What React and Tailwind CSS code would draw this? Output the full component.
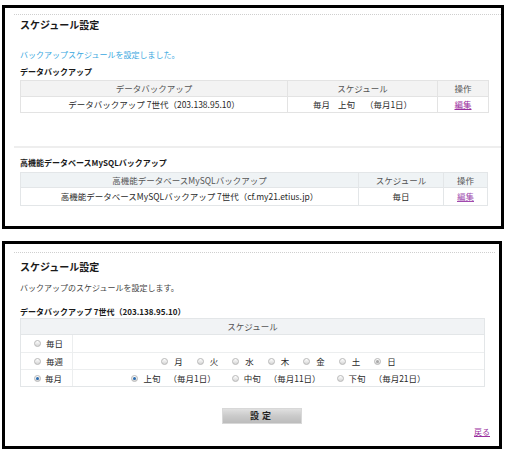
import React from "react";

function Radio({ checked = false, disabled = false }) {
  return (
    <span className="inline-flex w-[7px] h-[7px] shrink-0 items-center justify-center rounded-full border border-[#b8b8b8] bg-linear-to-b from-white to-[#d6d6d6]">
      {checked && !disabled && <span className="w-[3px] h-[3px] rounded-full bg-[#2b6cb0]" />}
      {checked && disabled && <span className="w-[3px] h-[3px] rounded-full bg-[#a8a8a8]" />}
    </span>
  );
}

function Day({ label, checked, disabled }) {
  return (
    <span className="flex items-center gap-[6px]">
      <Radio checked={checked} disabled={disabled} />
      <span>{label}</span>
    </span>
  );
}

export default function App() {
  return (
    <div className="w-[506px] h-[455px] bg-white overflow-hidden pt-[5px] pl-[2px] font-['Noto_Sans_CJK_JP','Noto_Sans',sans-serif] text-[#2a2a2a]">
      {/* Box 1 */}
      <div className="w-[502px] h-[224px] border-[3px] border-black pl-[9px]">
        <div className="mt-[6px] border-t border-dotted border-[#cfcfcf] pl-[6px] pr-[12px]">
          <div className="mt-[3px] h-[14px] leading-[14px] text-[10px] font-bold text-[#1a1a1a]">スケジュール設定</div>
          <div className="mt-[17px] h-[12px] leading-[12px] text-[8px] text-[#3aa8e0]">バックアップスケジュールを設定しました。</div>
          <div className="mt-[5px] h-[12px] leading-[12px] text-[8px] font-bold text-[#1a1a1a]">データバックアップ</div>
          <div className="mt-[2px] border border-[#e3e3e3] text-[8.5px]">
            <div className="flex h-[16px] bg-[#f3f3f3] text-[#555] border-b border-[#e3e3e3]">
              <div className="w-[267px] flex items-center justify-center border-r border-[#e3e3e3]">データバックアップ</div>
              <div className="w-[150px] flex items-center justify-center border-r border-[#e3e3e3]">スケジュール</div>
              <div className="flex-1 flex items-center justify-center">操作</div>
            </div>
            <div className="flex h-[15px]">
              <div className="w-[267px] flex items-center justify-center border-r border-[#e3e3e3]">データバックアップ 7世代（203.138.95.10）</div>
              <div className="w-[150px] flex items-center justify-center border-r border-[#e3e3e3]">
                <span>毎月</span><span className="ml-[8px]">上旬</span><span className="ml-[10px]">（毎月1日）</span>
              </div>
              <div className="flex-1 flex items-center justify-center">
                <a className="text-[#9a2f9e] underline">編集</a>
              </div>
            </div>
          </div>
        </div>
        <div className="mt-[33px] border-t-2 border-[#eeeeee] pl-[6px] pr-[13px]">
          <div className="mt-[9px] h-[12px] leading-[12px] text-[8px] font-bold text-[#1a1a1a]">高機能データベースMySQLバックアップ</div>
          <div className="mt-[3px] border border-[#e3e6e8] text-[8.5px]">
            <div className="flex h-[15px] bg-[#eff3f5] text-[#555] border-b border-[#e3e6e8]">
              <div className="w-[338px] flex items-center justify-center border-r border-[#e3e6e8]">高機能データベースMySQLバックアップ</div>
              <div className="w-[85px] flex items-center justify-center border-r border-[#e3e6e8]">スケジュール</div>
              <div className="flex-1 flex items-center justify-center">操作</div>
            </div>
            <div className="flex h-[17px]">
              <div className="w-[338px] flex items-center justify-center border-r border-[#e3e6e8]">高機能データベースMySQLバックアップ 7世代（cf.my21.etius.jp）</div>
              <div className="w-[85px] flex items-center justify-center border-r border-[#e3e6e8]">毎日</div>
              <div className="flex-1 flex items-center justify-center">
                <a className="text-[#a04aae] underline">編集</a>
              </div>
            </div>
          </div>
        </div>
      </div>

      {/* Box 2 */}
      <div className="mt-[12px] w-[500px] h-[208px] border-[3px] border-black pl-[9px] pr-[4px]">
        <div className="mt-[8px] border-t border-dotted border-[#cfcfcf] pl-[6px] pr-[10px]">
          <div className="mt-[7px] h-[14px] leading-[14px] text-[10px] font-bold text-[#1a1a1a]">スケジュール設定</div>
          <div className="mt-[8px] h-[12px] leading-[12px] text-[8px] text-[#444]">バックアップのスケジュールを設定します。</div>
          <div className="mt-[12px] h-[12px] leading-[12px] text-[8px] font-bold text-[#1a1a1a]">データバックアップ 7世代（203.138.95.10）</div>
          <div className="border border-[#e3e6e8] text-[8.5px]">
            <div className="flex h-[16px] items-center justify-center bg-[#f1f3f5] text-[#555] border-b border-[#e3e6e8]">スケジュール</div>
            <div className="flex h-[18px] border-b border-[#eceeef]">
              <div className="w-[52px] flex items-center gap-[5px] pl-[13px] border-r border-[#eceeef]">
                <Radio /><span>毎日</span>
              </div>
              <div className="flex-1" />
            </div>
            <div className="flex h-[17px] border-b border-[#eceeef]">
              <div className="w-[52px] flex items-center gap-[5px] pl-[13px] border-r border-[#eceeef]">
                <Radio /><span>毎週</span>
              </div>
              <div className="flex-1 flex items-center justify-center gap-[14px]">
                <Day label="月" />
                <Day label="火" />
                <Day label="水" />
                <Day label="木" />
                <Day label="金" />
                <Day label="土" />
                <Day label="日" checked disabled />
              </div>
            </div>
            <div className="flex h-[16px]">
              <div className="w-[52px] flex items-center gap-[4px] pl-[13px] border-r border-[#eceeef]">
                <Radio checked /><span>毎月</span>
              </div>
              <div className="flex-1 flex items-center justify-center gap-[16px]">
                <span className="flex items-center gap-[5px]">
                  <Radio checked /><span>上旬</span><span className="ml-[3px]">（毎月1日）</span>
                </span>
                <span className="flex items-center gap-[5px]">
                  <Radio /><span>中旬</span><span className="ml-[3px]">（毎月11日）</span>
                </span>
                <span className="flex items-center gap-[5px]">
                  <Radio /><span>下旬</span><span className="ml-[3px]">（毎月21日）</span>
                </span>
              </div>
            </div>
          </div>
          <div className="mt-[21px] ml-[202px] w-[80px] h-[16px] flex items-center justify-center border border-[#d8d8d8] bg-linear-to-b from-[#e0e0e0] via-[#cacaca] to-[#bcbcbc] text-[9px] font-bold tracking-[3px] text-[#222]">
            設定
          </div>
          <div className="mt-[2px] -mr-[5px] h-[12px] leading-[12px] flex justify-end text-[8px]">
            <a className="text-[#9a2f9e] underline">戻る</a>
          </div>
        </div>
      </div>
    </div>
  );
}
